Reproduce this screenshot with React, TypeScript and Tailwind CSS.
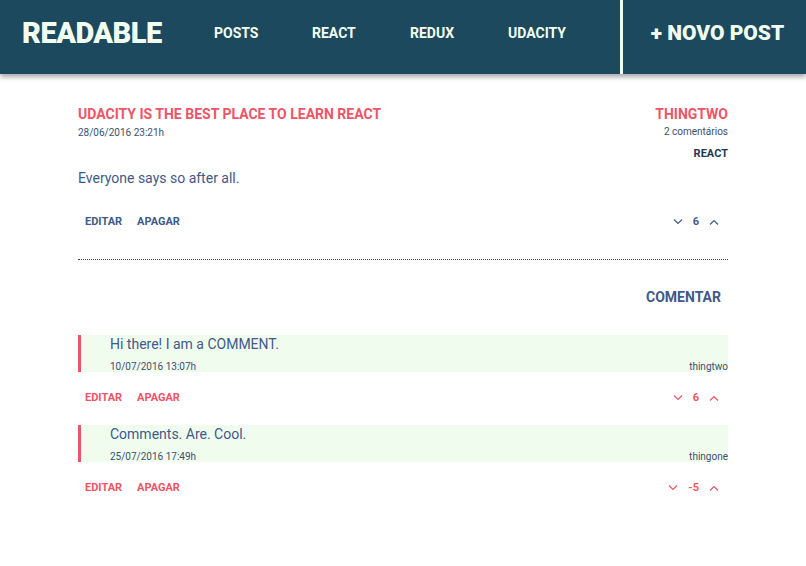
import React from 'react';

const font = { fontFamily: 'Roboto, "Liberation Sans", sans-serif' };

const Chevron = ({ up, className }: { up?: boolean; className?: string }) => (
  <svg width="10" height="6" viewBox="0 0 10 6" className={className} fill="none" stroke="currentColor" strokeWidth="1.2">
    {up ? <path d="M1 5.5 L5 1.5 L9 5.5" /> : <path d="M1 0.5 L5 4.5 L9 0.5" />}
  </svg>
);

const Actions = ({ score, red }: { score: string; red?: boolean }) => {
  const color = red ? 'text-[#ef5466]' : 'text-[#3e5a8a]';
  return (
    <div className={`flex items-center justify-between h-[30px] ${color}`}>
      <div className="flex gap-[15px] pl-[7px] text-[11px] font-bold">
        <span>EDITAR</span>
        <span>APAGAR</span>
      </div>
      <div className="flex items-center gap-[10px] pr-[9px]">
        <Chevron />
        <span className="text-[11px] font-bold">{score}</span>
        <Chevron up />
      </div>
    </div>
  );
};

const Comment = ({ body, date, author, score }: { body: string; date: string; author: string; score: string }) => (
  <div>
    <div className="bg-[#f0fdee] border-l-[3px] border-[#ef5466] pl-[29px] pt-[1px] h-[37px] flex flex-col justify-between text-[#3e5a8a]">
      <div className="text-[14px] leading-[16px]">{body}</div>
      <div className="flex justify-between text-[10px] leading-[10px] text-[#3c4f6e]">
        <span>{date}</span>
        <span>{author}</span>
      </div>
    </div>
    <div className="mt-[11px]">
      <Actions score={score} red />
    </div>
  </div>
);

export default function App() {
  return (
    <div className="min-h-[566px] bg-white" style={font}>
      <header className="h-[74px] bg-[#1c495e] flex shadow-[0_3px_5px_rgba(0,0,0,0.35)] text-[#f1fff0]">
        <div className="flex items-center flex-1 pb-[7px]">
          <div className="pl-[22px] w-[214px] text-[29px] font-black tracking-[-0.5px]">READABLE</div>
          <nav className="flex text-[14px] font-bold">
            <span className="w-[98px]">POSTS</span>
            <span className="w-[98px]">REACT</span>
            <span className="w-[98px]">REDUX</span>
            <span className="w-[98px]">UDACITY</span>
          </nav>
        </div>
        <div className="w-[3px] bg-[#f1fff0]" />
        <div className="w-[183px] flex items-center justify-center pb-[7px] pl-[6px] text-[21px] font-black">+ NOVO POST</div>
      </header>

      <main className="w-[650px] mx-auto pt-[31px]">
        <div className="flex justify-between">
          <div>
            <div className="text-[14px] font-bold text-[#ef5466] leading-[18px]">UDACITY IS THE BEST PLACE TO LEARN REACT</div>
            <div className="text-[10px] text-[#3c4f6e] leading-[14px] mt-[3px]">28/06/2016 23:21h</div>
          </div>
          <div className="text-right">
            <div className="text-[14px] font-bold text-[#ef5466] leading-[18px]">THINGTWO</div>
            <div className="text-[10px] text-[#3c4f6e] leading-[14px] mt-[2px]">2 comentários</div>
            <div className="text-[11px] font-bold text-[#1c3a52] leading-[14px] mt-[8px]">REACT</div>
          </div>
        </div>
        <div className="text-[14px] text-[#3e5a8a] mt-[8px] leading-[18px]">Everyone says so after all.</div>
        <div className="mt-[20px]">
          <Actions score="6" />
        </div>
        <div className="border-t border-dotted border-[#444] mt-[22px]" />
        <div className="flex justify-end mt-[27px] pr-[7px]">
          <span className="text-[14px] font-bold text-[#3e5a8a]">COMENTAR</span>
        </div>
        <div className="mt-[27px] flex flex-col gap-[12px]">
          <Comment body="Hi there! I am a COMMENT." date="10/07/2016 13:07h" author="thingtwo" score="6" />
          <Comment body="Comments. Are. Cool." date="25/07/2016 17:49h" author="thingone" score="-5" />
        </div>
      </main>
    </div>
  );
}
